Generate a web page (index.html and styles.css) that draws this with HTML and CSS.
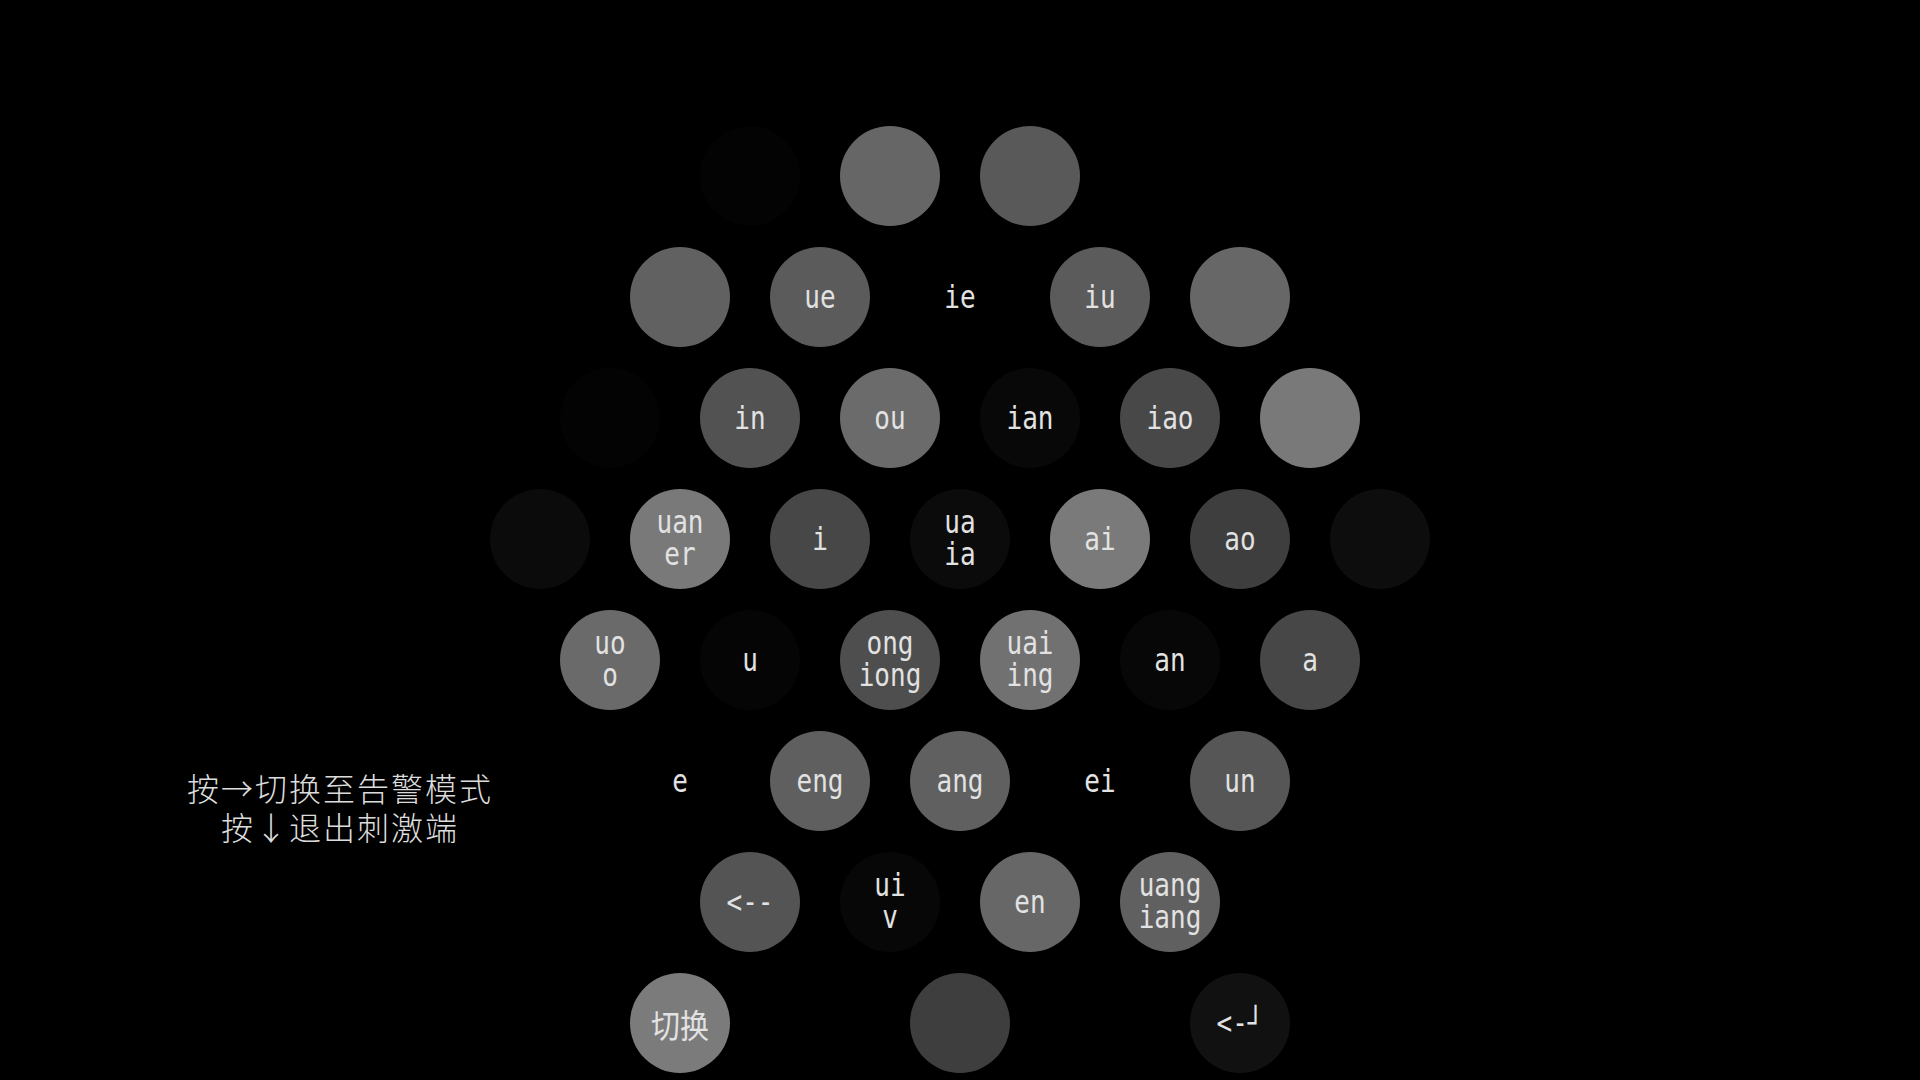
FILE: index.html
```html
<!DOCTYPE html>
<html lang="zh-CN">
<head>
    <meta charset="UTF-8">
    <meta name="viewport" content="width=device-width, initial-scale=1.0">
    <title>拼音键盘</title>
    <link rel="stylesheet" href="styles.css">
</head>
<body>
    <div id="screen">
        <div id="hint">
            <div>按→切换至告警模式</div>
            <div>按↓退出刺激端</div>
        </div>

        <div id="board">
            <!-- row 1 -->
            <div class="key r1 c4 s03"></div>
            <div class="key r1 c6 s66"></div>
            <div class="key r1 c8 s59"></div>

            <!-- row 2 -->
            <div class="key r2 c3 s61"></div>
            <div class="key r2 c5 s5b"><span class="label">ue</span></div>
            <div class="key r2 c7 s00"><span class="label">ie</span></div>
            <div class="key r2 c9 s5b"><span class="label">iu</span></div>
            <div class="key r2 c11 s67"></div>

            <!-- row 3 -->
            <div class="key r3 c2 s03"></div>
            <div class="key r3 c4 s52"><span class="label">in</span></div>
            <div class="key r3 c6 s6b"><span class="label">ou</span></div>
            <div class="key r3 c8 s08"><span class="label">ian</span></div>
            <div class="key r3 c10 s48"><span class="label">iao</span></div>
            <div class="key r3 c12 s79"></div>

            <!-- row 4 -->
            <div class="key r4 c1 s0b"></div>
            <div class="key r4 c3 s79"><span class="label">uan<br>er</span></div>
            <div class="key r4 c5 s47"><span class="label">i</span></div>
            <div class="key r4 c7 s0b"><span class="label">ua<br>ia</span></div>
            <div class="key r4 c9 s7a"><span class="label">ai</span></div>
            <div class="key r4 c11 s3e"><span class="label">ao</span></div>
            <div class="key r4 c13 s0d"></div>

            <!-- row 5 -->
            <div class="key r5 c2 s6a"><span class="label">uo<br>o</span></div>
            <div class="key r5 c4 s05"><span class="label">u</span></div>
            <div class="key r5 c6 s4e"><span class="label">ong<br>iong</span></div>
            <div class="key r5 c8 s71"><span class="label">uai<br>ing</span></div>
            <div class="key r5 c10 s07"><span class="label">an</span></div>
            <div class="key r5 c12 s47"><span class="label">a</span></div>

            <!-- row 6 -->
            <div class="key r6 c3 s00"><span class="label">e</span></div>
            <div class="key r6 c5 s5f"><span class="label">eng</span></div>
            <div class="key r6 c7 s60"><span class="label">ang</span></div>
            <div class="key r6 c9 s00"><span class="label">ei</span></div>
            <div class="key r6 c11 s56"><span class="label">un</span></div>

            <!-- row 7 -->
            <div class="key r7 c4 s54"><span class="label">&lt;--</span></div>
            <div class="key r7 c6 s07"><span class="label">ui<br>v</span></div>
            <div class="key r7 c8 s67"><span class="label">en</span></div>
            <div class="key r7 c10 s60"><span class="label">uang<br>iang</span></div>

            <!-- row 8 -->
            <div class="key r8 c3 s7b"><span class="label cjk">切换</span></div>
            <div class="key r8 c7 s3e"></div>
            <div class="key r8 c11 s11"><span class="label">&lt;-┘</span></div>
        </div>
    </div>
</body>
</html>
```

FILE: styles.css
```css
html, body {
    margin: 0;
    height: 100%;
    background-color: #000;
    overflow: hidden;
}

#screen {
    display: grid;
    grid-template-columns: 470px 980px 470px;
    height: 1080px;
}

#hint {
    align-self: start;
    justify-self: start;
    margin-top: 768px;
    margin-left: 186px;
    width: 308px;
    white-space: nowrap;
    text-align: center;
    font-family: "Noto Sans CJK SC", sans-serif;
    font-size: 32px;
    font-weight: 300;
    letter-spacing: 2px;
    color: #dcdcdc;
}

#hint div {
    height: 39px;
    line-height: 39px;
}

#board {
    display: grid;
    grid-template-columns: repeat(14, 70px);
    grid-template-rows: repeat(8, 100px);
    row-gap: 21px;
    padding-top: 126px;
    align-content: start;
}

.key {
    grid-column-end: span 2;
    justify-self: center;
    width: 100px;
    height: 100px;
    border-radius: 50%;
    display: flex;
    align-items: center;
    justify-content: center;
    text-align: center;
    color: #e2e2e2;
}

.label {
    display: inline-block;
    font-family: "DejaVu Sans Mono", monospace;
    font-size: 26px;
    line-height: 27px;
    transform: scaleY(1.2);
}

.label.cjk {
    font-family: "Noto Sans CJK SC", sans-serif;
    font-size: 29px;
    transform: scaleY(1.15);
}

/* rows */
.r1 { grid-row: 1; }
.r2 { grid-row: 2; }
.r3 { grid-row: 3; }
.r4 { grid-row: 4; }
.r5 { grid-row: 5; }
.r6 { grid-row: 6; }
.r7 { grid-row: 7; }
.r8 { grid-row: 8; }

/* columns, centre = 540px + 70px * (n - 1) */
.c1 { grid-column-start: 1; }
.c2 { grid-column-start: 2; }
.c3 { grid-column-start: 3; }
.c4 { grid-column-start: 4; }
.c5 { grid-column-start: 5; }
.c6 { grid-column-start: 6; }
.c7 { grid-column-start: 7; }
.c8 { grid-column-start: 8; }
.c9 { grid-column-start: 9; }
.c10 { grid-column-start: 10; }
.c11 { grid-column-start: 11; }
.c12 { grid-column-start: 12; }
.c13 { grid-column-start: 13; }

/* shades */
.s00 { background-color: #000; }
.s03 { background-color: #030303; }
.s05 { background-color: #050505; }
.s07 { background-color: #070707; }
.s08 { background-color: #080808; }
.s0b { background-color: #0b0b0b; }
.s0d { background-color: #0d0d0d; }
.s11 { background-color: #111; }
.s3e { background-color: #3e3e3e; }
.s47 { background-color: #474747; }
.s48 { background-color: #484848; }
.s4e { background-color: #4e4e4e; }
.s52 { background-color: #525252; }
.s54 { background-color: #545454; }
.s56 { background-color: #565656; }
.s59 { background-color: #595959; }
.s5b { background-color: #5b5b5b; }
.s5f { background-color: #5f5f5f; }
.s60 { background-color: #606060; }
.s61 { background-color: #616161; }
.s66 { background-color: #666; }
.s67 { background-color: #676767; }
.s6a { background-color: #6a6a6a; }
.s6b { background-color: #6b6b6b; }
.s71 { background-color: #717171; }
.s79 { background-color: #797979; }
.s7a { background-color: #7a7a7a; }
.s7b { background-color: #7b7b7b; }
```
